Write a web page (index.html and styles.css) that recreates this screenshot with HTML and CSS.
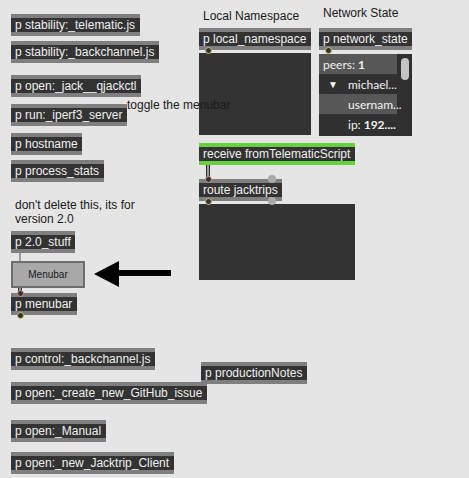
FILE: index.html
```html
<!DOCTYPE html>
<html>
<head>
<meta charset="utf-8">
<link rel="stylesheet" href="styles.css">
</head>
<body>
<div class="canvas">
  <div class="obj o-tele">p stability:_telematic.js</div>
  <div class="obj o-back">p stability:_backchannel.js</div>
  <div class="obj o-jack">p open:_jack__qjackctl</div>
  <div class="obj o-iperf">p run:_iperf3_server</div>
  <div class="obj o-host">p hostname</div>
  <div class="obj o-proc">p process_stats</div>

  <div class="comment c-dont">don't delete this, its for<br>version 2.0</div>
  <div class="obj o-stuff">p 2.0_stuff</div>
  <div class="cord-thin k-stuff"></div>
  <div class="menubtn">Menubar</div>
  <div class="cord k-menu"></div>
  <div class="obj o-menubar">p menubar</div>
  <div class="inlet-ring r-menu-in"></div>
  <div class="ring r-menu-out"></div>

  <svg class="arrow" width="80" height="28" viewBox="0 0 80 28">
    <polygon points="0,13 25,0 25,9 77,9 77,15 25,15 25,26" fill="#000"/>
  </svg>

  <div class="comment c-toggle">toggle the menubar</div>

  <div class="label l-local">Local Namespace</div>
  <div class="label l-net">Network State</div>

  <div class="obj o-local">p local_namespace</div>
  <div class="ring r-local"></div>
  <div class="panel p-local"></div>

  <div class="obj o-net">p network_state</div>
  <div class="ring r-net"></div>
  <div class="tree">
    <div class="rows">
      <div class="row hl"><span class="t0">peers: <b>1</b></span></div>
      <div class="row"><span class="tri">&#9660;</span><span class="t1">michael...</span></div>
      <div class="row hl"><span class="t1">usernam...</span></div>
      <div class="row"><span class="t1">ip: <b>192....</b></span></div>
    </div>
    <div class="scroll"><div class="thumb"></div></div>
  </div>

  <div class="obj green o-recv">receive fromTelematicScript</div>
  <div class="cord k-recv"></div>
  <div class="obj o-route">route jacktrips</div>
  <div class="inlet-ring r-route-in"></div>
  <div class="dot d-route-in2"></div>
  <div class="dot d-route-out2"></div>
  <div class="ring r-route-out"></div>
  <div class="panel p-route"></div>

  <div class="obj o-ctrl">p control:_backchannel.js</div>
  <div class="obj o-notes">p productionNotes</div>
  <div class="obj o-gh">p open:_create_new_GitHub_issue</div>
  <div class="obj o-man">p open:_Manual</div>
  <div class="obj o-client">p open:_new_Jacktrip_Client</div>
</div>
</body>
</html>
```

FILE: styles.css
```css
html, body {
  margin: 0;
  padding: 0;
  background: #e5e5e5;
}
.canvas {
  position: relative;
  width: 469px;
  height: 478px;
  overflow: hidden;
  background: #e5e5e5;
  font-family: "Liberation Sans", Arial, sans-serif;
}
.obj {
  position: absolute;
  box-sizing: border-box;
  height: 22px;
  background: #333333;
  border-top: 4px solid #7f7f7f;
  border-bottom: 4px solid #7f7f7f;
  color: #f0f0f0;
  font-size: 12px;
  line-height: 14px;
  padding-left: 4px;
  white-space: nowrap;
  overflow: hidden;
}
.obj.green {
  border-top-color: #66d13c;
  border-bottom-color: #66d13c;
}
.o-tele { left: 11px; top: 14px; width: 129px; }
.o-back { left: 11px; top: 41px; width: 148px; }
.o-jack { left: 11px; top: 75px; width: 130px; }
.o-iperf { left: 11px; top: 104px; width: 116px; }
.o-host { left: 11px; top: 133px; width: 71px; }
.o-proc { left: 11px; top: 160px; width: 93px; }
.o-stuff { left: 11px; top: 231px; width: 64px; }
.o-menubar { left: 11px; top: 293px; width: 66px; }
.o-local { left: 199px; top: 28px; width: 112px; }
.o-net { left: 319px; top: 28px; width: 93px; }
.o-recv { left: 199px; top: 143px; width: 156px; }
.o-route { left: 199px; top: 179px; width: 83px; }
.o-ctrl { left: 11px; top: 348px; width: 144px; }
.o-notes { left: 201px; top: 362px; width: 106px; }
.o-gh { left: 11px; top: 382px; width: 196px; }
.o-man { left: 11px; top: 420px; width: 95px; }
.o-client { left: 11px; top: 452px; width: 163px; }

.comment, .label {
  position: absolute;
  font-size: 12px;
  line-height: 14px;
  color: #1a1a1a;
  white-space: nowrap;
}
.c-dont { left: 15px; top: 199px; line-height: 13.5px; }
.c-toggle { left: 127px; top: 98px; z-index: 5; }
.l-local { left: 203px; top: 9px; }
.l-net { left: 323px; top: 6px; }

.panel {
  position: absolute;
  background: #333333;
}
.p-local { left: 199px; top: 53px; width: 112px; height: 82px; }
.p-route { left: 199px; top: 204px; width: 156px; height: 76px; }

.tree {
  position: absolute;
  left: 319px;
  top: 54px;
  width: 93px;
  height: 82px;
  background: #303030;
  display: flex;
  overflow: hidden;
  font-family: Lato, "Liberation Sans", sans-serif;
  font-size: 12px;
  color: #f2f2f2;
}
.rows {
  width: 78px;
  display: flex;
  flex-direction: column;
}
.row {
  height: 20px;
  display: flex;
  align-items: center;
  white-space: nowrap;
  position: relative;
}
.row.hl { background: #575757; }
.row b { font-weight: 700; }
.t0 { padding-left: 4px; }
.t1 { position: absolute; left: 29px; }
.tri { position: absolute; left: 9px; font-size: 10px; }
.scroll {
  flex: 1;
  position: relative;
}
.thumb {
  position: absolute;
  left: 4px;
  top: 4px;
  width: 8px;
  height: 22px;
  border-radius: 4px;
  background: #c4c4c4;
}

.ring {
  position: absolute;
  box-sizing: border-box;
  width: 7px;
  height: 7px;
  border-radius: 50%;
  border: 1.5px solid #c9c266;
  background: #333;
  z-index: 3;
}
.inlet-ring {
  position: absolute;
  box-sizing: border-box;
  width: 7px;
  height: 7px;
  border-radius: 50%;
  border: 1.5px solid #d49a8c;
  background: #333;
  z-index: 3;
}
.dot {
  position: absolute;
  width: 8px;
  height: 8px;
  border-radius: 50%;
  background: #aaaaaa;
  z-index: 3;
}
.r-local { left: 205px; top: 47px; }
.r-net { left: 325px; top: 47px; }
.r-menu-out { left: 17px; top: 312px; }
.r-menu-in { left: 17px; top: 290px; }
.r-route-in { left: 205px; top: 176px; }
.r-route-out { left: 205px; top: 198px; }
.d-route-in2 { left: 268px; top: 175px; }
.d-route-out2 { left: 268px; top: 197px; }

.cord {
  position: absolute;
  width: 2px;
  background: #9a9a9a;
  border-left: 1px solid #2a2a2a;
  border-right: 1px solid #2a2a2a;
  z-index: 2;
}
.cord-thin {
  position: absolute;
  width: 2px;
  background: #9a9a9a;
  z-index: 2;
}
.k-recv { left: 206px; top: 165px; height: 14px; }
.k-menu { left: 18px; top: 288px; height: 5px; }
.k-stuff { left: 19px; top: 253px; height: 8px; }

.menubtn {
  position: absolute;
  left: 11px;
  top: 261px;
  width: 74px;
  height: 27px;
  box-sizing: border-box;
  background: #a8a8a8;
  border: 2px solid #6e6e6e;
  font-size: 10px;
  line-height: 23px;
  text-align: center;
  color: #1a1a1a;
}
.arrow {
  position: absolute;
  left: 94px;
  top: 261px;
}
```
